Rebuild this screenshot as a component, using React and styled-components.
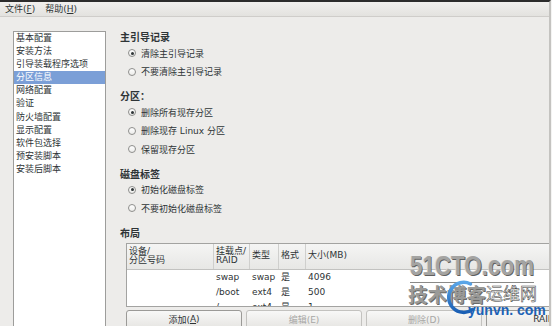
import React from "react";
import styled, { createGlobalStyle } from "styled-components";

const GlobalStyle = createGlobalStyle`
  html, body {
    margin: 0;
    padding: 0;
    background: #f4f4f3;
  }
  body {
    font-family: "DejaVu Sans", "Noto Sans CJK SC", sans-serif;
  }
`;

const Frame = styled.div`
  position: relative;
  width: 551px;
  height: 326px;
  box-sizing: border-box;
  overflow: hidden;
  background: #edecea;
  border-top: 2px solid #2c2c2c;
  border-right: 2px solid #c4c3c0;
  color: #2e3436;
  font-size: 9px;
`;

const MenuBar = styled.div`
  height: 15px;
  box-sizing: border-box;
  display: flex;
  align-items: center;
  gap: 10px;
  padding-left: 5px;
  background: linear-gradient(#f1f0ee, #e3e2df);
  border-bottom: 1px solid #cfcdca;
  line-height: 12px;
`;

const MenuItem = styled.span`
  u {
    text-decoration-thickness: 1px;
    text-underline-offset: 1px;
  }
`;

const Body = styled.div`
  display: flex;
  align-items: flex-start;
`;

const Sidebar = styled.ul`
  list-style: none;
  margin: 14px 0 0 13px;
  padding: 0;
  width: 93px;
  height: 320px;
  flex-shrink: 0;
  box-sizing: border-box;
  background: #fff;
  border: 1px solid #9d9d9b;
`;

const SideItem = styled.li`
  height: 13.1px;
  line-height: 13.1px;
  padding-left: 2px;
  white-space: nowrap;
  background: ${(p) => (p.$active ? "#7b9fd7" : "transparent")};
  color: ${(p) => (p.$active ? "#fff" : "#2e3436")};
`;

const Content = styled.div`
  margin-left: 14px;
  padding-top: 13px;
  width: 486px;
  flex-shrink: 0;
`;

const SectionTitle = styled.div`
  font-family: "Noto Sans CJK SC", "DejaVu Sans", sans-serif;
  font-size: 10px;
  font-weight: bold;
  line-height: 14px;
  margin-top: ${(p) => (p.$first ? "0" : "8px")};
  white-space: nowrap;
`;

const RadioRow = styled.div`
  height: 18.5px;
  display: flex;
  align-items: center;
  gap: 5px;
  padding-left: 8px;
  white-space: nowrap;
`;

const Radio = styled.span`
  width: 8px;
  height: 8px;
  box-sizing: border-box;
  border-radius: 50%;
  border: 1px solid #8e8e8c;
  background: linear-gradient(#ffffff, #ececea);
  display: flex;
  align-items: center;
  justify-content: center;

  &::after {
    content: "";
    width: 3px;
    height: 3px;
    border-radius: 50%;
    background: #2e3436;
    display: ${(p) => (p.$checked ? "block" : "none")};
  }
`;

const Table = styled.div`
  margin: 3px 0 0 6px;
  width: 480px;
  box-sizing: border-box;
  border: 1px solid #a3a3a1;
  background: #fff;
`;

const COLS = "86px 36px 29px 27px 1fr";

const HeaderRow = styled.div`
  display: grid;
  grid-template-columns: ${COLS};
  height: 25px;
  background: linear-gradient(#f5f5f4, #e7e7e5);
  border-bottom: 1px solid #c2c2c0;
`;

const HeadCell = styled.div`
  display: flex;
  flex-direction: column;
  justify-content: center;
  padding-left: 2px;
  line-height: 9.5px;
  white-space: nowrap;
  border-left: ${(p) => (p.$first ? "none" : "1px solid #cfcfcd")};
`;

const RowsArea = styled.div`
  height: 36px;
  overflow: hidden;
`;

const Row = styled.div`
  display: grid;
  grid-template-columns: ${COLS};
  height: 15px;
  line-height: 15px;
`;

const Cell = styled.div`
  padding-left: 3px;
  white-space: nowrap;
`;

const ButtonRow = styled.div`
  display: grid;
  grid-template-columns: repeat(4, 116px);
  gap: 4px;
  margin: 3px 0 0 6px;
`;

const Button = styled.div`
  height: 19px;
  box-sizing: border-box;
  display: flex;
  align-items: center;
  justify-content: center;
  border-radius: 3px;
  border: 1px solid ${(p) => (p.$disabled ? "#c3c2bf" : "#9b9a97")};
  background: linear-gradient(#f8f8f7, #e6e5e2);
  color: ${(p) => (p.$disabled ? "#a7a7a5" : "#2e3436")};
  white-space: nowrap;
`;

const Watermark = styled.div`
  position: absolute;
  left: 404px;
  top: 250px;
  width: 150px;
  height: 76px;
  pointer-events: none;
`;

const WmLogo = styled.div`
  font-family: "Liberation Sans", Arial, sans-serif;
  font-weight: bold;
  font-size: 28px;
  line-height: 28px;
  margin-left: 6px;
  transform: scaleX(0.8);
  transform-origin: left top;
  color: #a4a4a2;
  text-shadow: 1px 1px 0 #5f5f5f, -1px 0 0 #dadad8;
  white-space: nowrap;
`;

const WmLine = styled.div`
  width: 124px;
  height: 1px;
  margin: 2px 0 0 6px;
  background: #8a8a88;
`;

const WmLower = styled.div`
  display: flex;
  align-items: flex-start;
  margin-left: 4px;
  white-space: nowrap;
`;

const WmBlog = styled.span`
  font-family: "Noto Sans CJK SC", sans-serif;
  font-weight: bold;
  font-size: 19.5px;
  line-height: 22px;
  color: #9a9a98;
  text-shadow: 1px 1px 0 #6a6a68;
`;

const WmNet = styled.span`
  font-family: "Noto Sans CJK SC", sans-serif;
  font-size: 17px;
  line-height: 20px;
  color: rgba(240, 240, 238, 0.85);
  -webkit-text-stroke: 0.5px #3a3a3a;
`;

const WmDomain = styled.div`
  position: absolute;
  left: 64px;
  top: 51px;
  font-family: "Liberation Sans", Arial, sans-serif;
  font-weight: bold;
  font-size: 14px;
  line-height: 14px;
  color: #1c62b6;
  white-space: nowrap;
`;

const WmRing = styled.svg`
  position: absolute;
  left: 40px;
  top: 27px;
`;

const sideItems = [
  "基本配置",
  "安装方法",
  "引导装载程序选项",
  "分区信息",
  "网络配置",
  "验证",
  "防火墙配置",
  "显示配置",
  "软件包选择",
  "预安装脚本",
  "安装后脚本",
];

const rows = [
  ["", "swap", "swap", "是", "4096"],
  ["", "/boot", "ext4", "是", "500"],
  ["", "/", "ext4", "是", "1"],
];

const Section = ({ title, options, first }) => (
  <>
    <SectionTitle $first={first}>{title}</SectionTitle>
    {options.map((o, i) => (
      <RadioRow key={o}>
        <Radio $checked={i === 0} />
        {o}
      </RadioRow>
    ))}
  </>
);

export default function App() {
  return (
    <>
      <GlobalStyle />
      <Frame>
        <MenuBar>
          <MenuItem>
            文件(<u>F</u>)
          </MenuItem>
          <MenuItem>
            帮助(<u>H</u>)
          </MenuItem>
        </MenuBar>
        <Body>
          <Sidebar>
            {sideItems.map((s) => (
              <SideItem key={s} $active={s === "分区信息"}>
                {s}
              </SideItem>
            ))}
          </Sidebar>
          <Content>
            <Section first title="主引导记录" options={["清除主引导记录", "不要清除主引导记录"]} />
            <Section
              title="分区："
              options={["删除所有现存分区", "删除现存 Linux 分区", "保留现存分区"]}
            />
            <Section title="磁盘标签" options={["初始化磁盘标签", "不要初始化磁盘标签"]} />
            <SectionTitle>布局</SectionTitle>
            <Table>
              <HeaderRow>
                <HeadCell $first>
                  <span>设备/</span>
                  <span>分区号码</span>
                </HeadCell>
                <HeadCell>
                  <span>挂载点/</span>
                  <span>RAID</span>
                </HeadCell>
                <HeadCell>类型</HeadCell>
                <HeadCell>格式</HeadCell>
                <HeadCell>大小(MB)</HeadCell>
              </HeaderRow>
              <RowsArea>
                {rows.map((r, i) => (
                  <Row key={i}>
                    {r.map((c, j) => (
                      <Cell key={j}>{c}</Cell>
                    ))}
                  </Row>
                ))}
              </RowsArea>
            </Table>
            <ButtonRow>
              <Button>
                添加(<u>A</u>)
              </Button>
              <Button $disabled>编辑(E)</Button>
              <Button $disabled>删除(D)</Button>
              <Button>RAID</Button>
            </ButtonRow>
          </Content>
        </Body>
        <Watermark>
          <WmLogo>51CTO.com</WmLogo>
          <WmLine />
          <WmLower>
            <WmBlog>技术博客</WmBlog>
            <WmNet>运维网</WmNet>
          </WmLower>
          <WmRing width="38" height="38" viewBox="0 0 38 38">
            <defs>
              <linearGradient id="ring" x1="0" y1="0" x2="0" y2="1">
                <stop offset="0" stopColor="#5aa6e8" />
                <stop offset="1" stopColor="#1a5fb4" />
              </linearGradient>
            </defs>
            <path
              d="M26.5 5 A15 15 0 1 0 28.6 30.5"
              fill="none"
              stroke="url(#ring)"
              strokeWidth="3.5"
              strokeLinecap="round"
            />
          </WmRing>
          <WmDomain>yunvn. com</WmDomain>
        </Watermark>
      </Frame>
    </>
  );
}
